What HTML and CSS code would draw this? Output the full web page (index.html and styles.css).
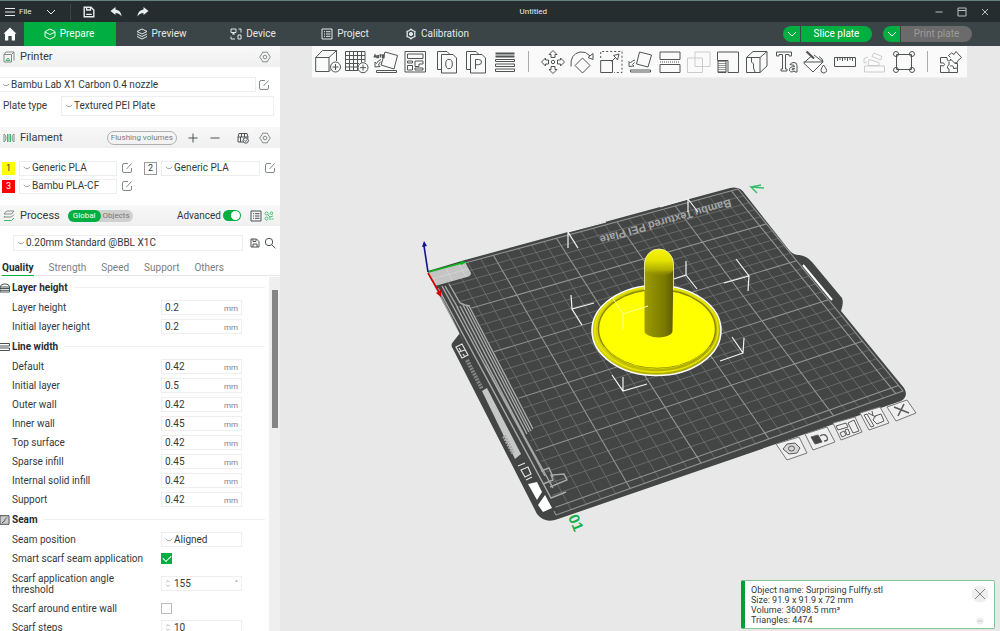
FILE: index.html
```html
<!DOCTYPE html>
<html lang="en">
<head>
<meta charset="utf-8">
<title>Untitled</title>
<link rel="stylesheet" href="styles.css">
</head>
<body>
<svg class="defs" aria-hidden="true">
  <symbol id="chev" viewBox="0 0 10 10"><path d="M1 3.5 L3.5 5.8 H6.5 L9 3.5"/></symbol>
  <symbol id="chevron" viewBox="0 0 10 10"><path d="M1 3 L5 7 L9 3"/></symbol>
  <symbol id="edit" viewBox="0 0 12 12"><path d="M7 1.5 H3 Q1.5 1.5 1.5 3 V9 Q1.5 10.5 3 10.5 H9 Q10.5 10.5 10.5 9 V6 M5.5 7 L10.5 1.5"/></symbol>
  <symbol id="gear" viewBox="0 0 12 12"><path d="M3.6 1.2 H8.4 L9 2.6 L11.3 6 L9 9.4 L8.4 10.8 H3.6 L3 9.4 L.7 6 L3 2.6Z"/><circle cx="6" cy="6" r="1.8"/></symbol>
  <symbol id="spin" viewBox="0 0 10 14"><path d="M2 5 L5 2 L8 5 M2 9 L5 12 L8 9"/></symbol>
</svg>

<header class="titlebar">
  <div class="title-left">
    <button class="file"><svg class="i12" viewBox="0 0 12 12"><path d="M1 2.5H11M1 6H11M1 9.5H11"/></svg>File</button>
    <button class="file-more" aria-label="More"><svg class="i10" viewBox="0 0 10 10"><use href="#chevron"/></svg></button>
    <span class="divider"></span>
    <button aria-label="Save"><svg class="i12" viewBox="0 0 12 12"><path stroke-width="1.4" d="M1.2 1.2H8L10.8 4V10.8H1.2Z"/><path stroke-width="1.3" d="M3.6 1.5V4H7.5V1.5M3.2 8.3H8.8"/></svg></button>
    <button aria-label="Undo"><svg class="i12 solid" viewBox="0 0 12 12"><path d="M.5 5 L5.5 1 V3.5 Q11 4 11.5 10.5 Q9.5 7 5.5 7 V9Z"/></svg></button>
    <button aria-label="Redo"><svg class="i12 solid" viewBox="0 0 12 12"><path d="M11.5 5 L6.5 1 V3.5 Q1 4 .5 10.5 Q2.5 7 6.5 7 V9Z"/></svg></button>
  </div>
  <h1>Untitled</h1>
  <div class="title-right">
    <button aria-label="Minimize"><svg class="i10" viewBox="0 0 10 10"><path d="M1.5 5H8.5"/></svg></button>
    <button aria-label="Maximize"><svg class="i10" viewBox="0 0 10 10"><path d="M1 1H9V9H1ZM1 3.5H9"/></svg></button>
    <button aria-label="Close"><svg class="i10" viewBox="0 0 10 10"><path d="M2 2L8 8M8 2L2 8"/></svg></button>
  </div>
</header>

<nav class="tabs">
  <button class="home" aria-label="Home"><svg class="i14 solid" viewBox="0 0 14 14"><path d="M7 .5 L13.5 6.8 H12 V13.5 H8.7 V9 H5.3 V13.5 H2 V6.8 H.5Z"/></svg></button>
  <button class="tab active"><svg class="i12" viewBox="0 0 12 12"><path d="M6 1 L11 3.6 V8.6 L6 11.2 L1 8.6 V3.6ZM1 4 L6 6.6 L11 4"/></svg>Prepare</button>
  <button class="tab"><svg class="i12" viewBox="0 0 12 12"><path d="M6 1 L11 3.5 L6 6 L1 3.5ZM1 6 L6 8.5 L11 6M1 8.5 L6 11 L11 8.5"/></svg>Preview</button>
  <button class="tab"><svg class="i12" viewBox="0 0 12 12"><path d="M1 1H6V4.5H1ZM3.5 4.5V6M2 6H5M8 7H11V11H8ZM8.5 1H11V4.5M1 8.5V11H5"/></svg>Device</button>
  <button class="tab"><svg class="i12" viewBox="0 0 12 12"><path d="M1 1H11V11H1ZM3 3.7H4M5 3.7H9.5M3 6H4M5 6H9.5M3 8.3H4M5 8.3H9.5"/></svg>Project</button>
  <button class="tab"><svg class="i12" viewBox="0 0 12 12"><path stroke-width="1.3" d="M6 1.2 L7.5 2.5 L10 3.5 L9.7 6 L10 8.5 L7.5 9.5 L6 10.8 L4.500 9.5 L2 8.5 L2.300 6 L2 3.500 L4.500 2.500Z"/><circle cx="6" cy="6" r="1.6" fill="currentColor"/></svg>Calibration</button>
  <div class="actions">
    <div class="split"><button class="drop" aria-label="Slice options"><svg class="i10" viewBox="0 0 10 10"><use href="#chevron"/></svg></button><button class="main">Slice plate</button></div>
    <div class="split"><button class="drop" aria-label="Print options"><svg class="i10" viewBox="0 0 10 10"><use href="#chevron"/></svg></button><button class="main off" disabled>Print plate</button></div>
  </div>
</nav>

<main class="work">
  <aside class="side">
    <section class="printer">
      <header class="bar"><svg class="i12" viewBox="0 0 12 12"><path d="M1 3.500H8.500V11H1ZM3 1H11V9.500M8.500 3.500L11 1M1 3.500L3 1"/><path class="green" d="M3 9.500H7L5 7Z"/></svg><h2>Printer</h2><button class="last" aria-label="Printer settings"><svg class="i12" viewBox="0 0 12 12"><use href="#gear"/></svg></button></header>
      <div class="line first">
        <div class="combo nozzle"><svg class="i10" viewBox="0 0 10 10"><use href="#chev"/></svg><select aria-label="Printer model"><option>Bambu Lab X1 Carbon 0.4 nozzle</option></select></div>
        <button aria-label="Edit printer"><svg class="i12" viewBox="0 0 12 12"><use href="#edit"/></svg></button>
      </div>
      <div class="line plate">
        <label for="plate">Plate type</label>
        <div class="combo tall"><svg class="i10" viewBox="0 0 10 10"><use href="#chev"/></svg><select id="plate"><option>Textured PEI Plate</option></select></div>
      </div>
    </section>

    <section class="filament">
      <header class="bar"><svg class="i12" viewBox="0 0 12 12"><path d="M1 2V10M11 2V10M1 2Q3 3 3 6T1 10M11 2Q9 3 9 6T11 10"/><path class="green" d="M4.500 2V10M6 2V10M7.500 2V10"/></svg><h2>Filament</h2>
        <div class="bar-tools"><button class="pill">Flushing volumes</button>
        <button aria-label="Add"><svg class="i12 dark" viewBox="0 0 12 12"><path d="M6 1.500V10.500M1.500 6H10.500"/></svg></button>
        <button aria-label="Remove"><svg class="i12 dark" viewBox="0 0 12 12"><path d="M1.500 6H10.500"/></svg></button>
        <button class="ams" aria-label="Sync filament"><svg class="i12 dark" viewBox="0 0 12 12"><path d="M2 1.500H10L11 5H1ZM1 5V10H6M4.500 2V5M7.500 2V5M3.500 5V10M11 5V6"/><circle cx="8.700" cy="8.500" r="2.700"/><path d="M7.500 8.500L8.500 9.500L10 7.500"/></svg></button>
        <button aria-label="Filament settings"><svg class="i12" viewBox="0 0 12 12"><use href="#gear"/></svg></button></div>
      </header>
      <div class="spools">
        <div class="spool"><button class="chip yellow">1</button><div class="combo"><svg class="i10" viewBox="0 0 10 10"><use href="#chev"/></svg><select aria-label="Filament 1"><option>Generic PLA</option></select></div><button aria-label="Edit filament 1"><svg class="i12" viewBox="0 0 12 12"><use href="#edit"/></svg></button></div>
        <div class="spool"><button class="chip">2</button><div class="combo"><svg class="i10" viewBox="0 0 10 10"><use href="#chev"/></svg><select aria-label="Filament 2"><option>Generic PLA</option></select></div><button aria-label="Edit filament 2"><svg class="i12" viewBox="0 0 12 12"><use href="#edit"/></svg></button></div>
        <div class="spool"><button class="chip red">3</button><div class="combo"><svg class="i10" viewBox="0 0 10 10"><use href="#chev"/></svg><select aria-label="Filament 3"><option>Bambu PLA-CF</option></select></div><button aria-label="Edit filament 3"><svg class="i12" viewBox="0 0 12 12"><use href="#edit"/></svg></button></div>
      </div>
    </section>

    <section class="process">
      <header class="bar"><svg class="i12" viewBox="0 0 12 12"><path d="M3.500 1H11L8.500 4H1ZM1 7H8.500L11 4.500"/><path class="green" d="M1 10.500H8.500L11 8M1 7.500L1.500 6"/></svg><h2>Process</h2>
        <div class="scope"><button class="on">Global</button><button>Objects</button></div>
        <label class="advanced">Advanced<input type="checkbox" class="switch" checked></label>
        <button aria-label="Parameter list"><svg class="i12 dark" viewBox="0 0 12 12"><path d="M1 1H11V11H1ZM3 3.700H4M5 3.700H9.500M3 6H4M5 6H9.500M3 8.300H4M5 8.300H9.500"/></svg></button>
        <button class="compare" aria-label="Compare presets"><svg class="i10 leaf" viewBox="0 0 10 10"><circle cx="2.500" cy="2.500" r="1.500"/><circle cx="7.500" cy="2.200" r="1.300"/><circle cx="2.500" cy="7.500" r="1.500"/><path d="M4 4L6 6L9 5M6 6L6 9M7.500 8H9.500M5 3.500V4"/></svg></button>
      </header>
      <div class="line preset">
        <div class="combo"><svg class="i10" viewBox="0 0 10 10"><use href="#chev"/></svg><select aria-label="Process preset"><option>0.20mm Standard @BBL X1C</option></select></div>
        <button aria-label="Save preset"><svg class="i10 dark" viewBox="0 0 10 10"><path d="M1 1H6.500L9 3.500V9H1ZM3 1V3.500H6V1M3 9V6H7V9"/></svg></button>
        <button aria-label="Search"><svg class="i12 dark" viewBox="0 0 12 12"><circle cx="5" cy="5" r="3.700"/><path d="M7.700 7.700L11.300 11.300"/></svg></button>
      </div>
      <div class="pages"><button class="on">Quality</button><button>Strength</button><button>Speed</button><button>Support</button><button>Others</button></div>
    </section>

    <section class="params">
      <form class="fields">
        <h3><svg class="i10" viewBox="0 0 10 10"><path d="M0 9V4Q1 1 4 1H6Q9 1 9.500 4V9ZM0 4H9.500M0 5.500H9.500M0 7.300H9.500"/></svg>Layer height</h3>
        <div class="field"><label for="f1">Layer height</label><span class="num"><input id="f1" value="0.2"><small>mm</small></span></div>
        <div class="field"><label for="f2">Initial layer height</label><span class="num"><input id="f2" value="0.2"><small>mm</small></span></div>
        <h3><svg class="i10" viewBox="0 0 10 10"><path d="M0 1.500H9.500V4H0M0 6H9.500M0 8.500H9.500V6"/></svg>Line width</h3>
        <div class="field"><label for="f3">Default</label><span class="num"><input id="f3" value="0.42"><small>mm</small></span></div>
        <div class="field"><label for="f4">Initial layer</label><span class="num"><input id="f4" value="0.5"><small>mm</small></span></div>
        <div class="field"><label for="f5">Outer wall</label><span class="num"><input id="f5" value="0.42"><small>mm</small></span></div>
        <div class="field"><label for="f6">Inner wall</label><span class="num"><input id="f6" value="0.45"><small>mm</small></span></div>
        <div class="field"><label for="f7">Top surface</label><span class="num"><input id="f7" value="0.42"><small>mm</small></span></div>
        <div class="field"><label for="f8">Sparse infill</label><span class="num"><input id="f8" value="0.45"><small>mm</small></span></div>
        <div class="field"><label for="f9">Internal solid infill</label><span class="num"><input id="f9" value="0.42"><small>mm</small></span></div>
        <div class="field"><label for="f10">Support</label><span class="num"><input id="f10" value="0.42"><small>mm</small></span></div>
        <h3><svg class="i10" viewBox="0 0 10 10"><path fill="#ccc" d="M0 .7H9V9.300H0Z"/><path d="M2 8L5 5.500V4.500L7 2.500"/></svg>Seam</h3>
        <div class="field"><label for="f11">Seam position</label><span class="num combo"><svg class="i10" viewBox="0 0 10 10"><use href="#chev"/></svg><select id="f11"><option>Aligned</option></select></span></div>
        <div class="field"><label for="f12">Smart scarf seam application</label><input id="f12" class="check" type="checkbox" checked></div>
        <div class="field double"><label for="f13">Scarf application angle threshold</label><span class="num"><svg class="spin" viewBox="0 0 10 14"><use href="#spin"/></svg><input id="f13" value="155"><small class="deg">°</small></span></div>
        <div class="field"><label for="f14">Scarf around entire wall</label><input id="f14" class="check" type="checkbox"></div>
        <div class="field"><label for="f15">Scarf steps</label><span class="num"><svg class="spin" viewBox="0 0 10 14"><use href="#spin"/></svg><input id="f15" value="10"></span></div>
      </form>
      <div class="track"><div class="thumb"></div></div>
    </section>
  </aside>

  <section class="view">
    <svg class="scene" viewBox="280 46 720 585" preserveAspectRatio="xMidYMid meet" role="img" aria-label="Build plate">
      <defs>
        <linearGradient id="rod" x1="0" x2="1" y1="0" y2="0"><stop offset="0" stop-color="#a09e00"/><stop offset=".25" stop-color="#918f00"/><stop offset=".7" stop-color="#7b7900"/><stop offset="1" stop-color="#5e5c00"/></linearGradient>
        <linearGradient id="dome" x1="0" x2="0" y1="0" y2="1"><stop offset="0" stop-color="#f8f600"/><stop offset=".4" stop-color="#e6e400"/><stop offset=".75" stop-color="#b5b300" stop-opacity=".9"/><stop offset="1" stop-color="#858300" stop-opacity="0"/></linearGradient>
        <linearGradient id="rim" x1="0" x2=".7" y1="0" y2="1"><stop offset="0" stop-color="#c8c600"/><stop offset=".5" stop-color="#d8d600"/><stop offset="1" stop-color="#a8a600"/></linearGradient>
      </defs>
      <path class="bed" d="M428 271 L465 260 L730 188 Q740 186 745 194 L789 250 Q793 255 799 255 Q807 256 812 262 L842 298 Q844 303 841 311 L904 388 Q909 396 901 401 L558 519 Q545 524 537 514 L453 349 Q450 345 453 342 L460 333Z"/>
      <path id="grid-minor" class="minor"/>
      <path id="grid-major" class="major"/>
      <path class="patch" d="M428 273 L465 262 L471 273 Q471 276 467 277 L435 286Z"/>
      <path class="tick" d="M446 268L452 281M432 279L468 269M459 264L466 277"/>
      <path fill="#434545" d="M438 287 L449 284 L459 303 L470 306 L535 429 L527 434 L546 470 L556 510 L545 516Z"/>
      <g class="stripe">
        <path d="M438 288L551 498L566 492"/><path d="M442 286L545 476"/><path d="M449 284L460 303"/>
        <path d="M445 286L458 308"/><path d="M457 307L524 435"/><path d="M460 306L527 434"/><path d="M463 305L529 432"/><path d="M466 305L531 431"/><path d="M469 306L533 429"/>
        <path d="M460 303L465 305L470 306"/><path d="M541 471L549 468L553 477"/><path d="M543 484L553 480L551 475L564 474L567 480L550 487"/><path d="M485 365L553 488"/>
      </g>
      <path class="band" d="M482 391L487 388L521 454L515 459Z"/>
      <path class="faint" d="M467 360L482 389" stroke-dasharray="2 1"/>
      <path class="glyph" d="M456 347L462 344L468 355L462 358ZM459 352L465 350M459 348L461 351M463 354L465 357"/>
      <path class="dark" d="M504 436L513 453" stroke-dasharray="2 1"/>
      <path class="glyph" d="M518 466L525 463M521 470L528 467L531 474L525 477ZM526 480L532 477"/>
      <path fill="#fff" d="M528 484L537 482L542 492L537 500ZM538 505L545 495L552 508L543 512Z"/>
      <path stroke="#fff" stroke-width="2" d="M803 265L832 300"/>
      <text class="plate-name" transform="translate(730 199) rotate(164)">Bambu Textured PEI Plate</text>
      <text class="plate-no" transform="translate(568 517) rotate(68)">01</text>
      <path fill="none" stroke="#38bf6c" stroke-width="1.500" d="M764 188L751 187L757 193M751 187L761 185"/>

      <path class="axis" stroke="#0bb41a" d="M428 272L462 263"/><path fill="#0bb41a" d="M460 261L467 262L461 265Z"/>
      <path class="axis" stroke="#10109a" d="M428 272L424 246"/><path fill="#10109a" d="M422 247L424 241L427 246Z"/>
      <path class="axis" stroke="#d40000" d="M428 273L439 292"/><path fill="#d40000" d="M436 293L441 290L441 297Z"/>

      <g class="bracket">
        <path d="M568 248V232L606 222M568 232L578 248"/><path d="M688 212V199L660 207M688 199L698 212"/><path d="M571 295L572 309L594 303M572 309L582 325"/>
        <path d="M686 261V275L674 279M686 275L697 289"/><path d="M736 259L749 276L724 283M749 276L748 291"/><path d="M732 337L743 353L720 361M743 353L744 338"/><path d="M612 375L623 391L647 384M623 391V377"/>
      </g>
      <ellipse cx="656.500" cy="330.500" rx="64.500" ry="45" fill="url(#rim)" stroke="#fff" stroke-width="1.500"/>
      <ellipse cx="656.500" cy="329.500" rx="61.500" ry="42.500" fill="none" stroke="#e6e400" stroke-width="1.600"/>
      <ellipse cx="657" cy="329" rx="58.500" ry="39.500" fill="#ffff00" stroke="#8b8900" stroke-width="1.400"/>
      <path d="M604 347Q625 369 657 369T710 347" fill="none" stroke="#d6d400"/>
      <path d="M644.500 264A14.500 15 0 0 1 673.500 264L672.500 331A14 6.500 0 0 1 644.500 331Z" fill="url(#rod)"/>
      <path d="M644.500 264A14.500 15 0 0 1 673.500 264V268A14.500 9 0 0 1 644.500 268Z" fill="url(#dome)"/>
      <path d="M644.500 290V264A14.500 15 0 0 1 673.500 264V290" fill="none" stroke="#f5f5c0" stroke-width=".8"/>
      <path d="M612 297L623 314L648 306M623 314V330" fill="none" stroke="#ffff9c"/>

      <g class="tile">
        <path d="M776 444L799 437L807 453L787 460Z"/><path d="M805 434L827 427L835 442L813 450Z"/><path d="M833 423L855 417L862 432L841 440Z"/><path d="M860 413L880 407L889 423L869 430Z"/><path d="M887 407L907 400L916 413L896 421Z"/>
      </g>
      <g class="tile-art">
        <path fill="#d5d5d5" d="M783 449L787 444L795 443L800 448L797 453L789 454Z"/><ellipse cx="791.500" cy="448.500" rx="3" ry="2.500"/>
        <path fill="#444" d="M811 437L818 435L822 442L815 444Z"/><path stroke-width="1.300" d="M820 436Q825 433 827 437T824 441"/>
        <path d="M836 426L846 423L848 427L838 430ZM840 433L844 431L846 435L842 437ZM848 423L854 420L859 431L853 433ZM845 430L848 429L850 434L847 435Z"/>
        <path d="M864 415L867 414L874 426L871 427ZM875 416L881 414L884 421L877 424L873 420ZM868 413L876 417M872 411L873 416"/>
        <path stroke-width="1.600" d="M894 407L909 413M904 404L898 416"/>
      </g>
    </svg>

    <div class="toolbar">
      <div class="group">
        <button aria-label="Add object"><svg viewBox="0 0 26 26"><path d="M.7 8.500H14V22.500H.7ZM.7 8.500L7.500 1.500H21.500L14 8.500M21.500 1.500V12M14 22.500L16 20.500"/><circle cx="20.500" cy="18" r="5"/><path d="M17.500 18H23.500M20.500 15V21"/></svg></button>
        <button aria-label="Add plate"><svg viewBox="0 0 26 26"><path d="M1.500 2.500H21V13M14 21.500H1.500V2.500M5.500 2.500V21.500M9.500 2.500V21.500M13.500 2.500V21.500M17.500 2.500V13.500M1.500 6.500H21M1.500 10.500H21M1.500 14.500H15M1.500 18H14"/><circle cx="19" cy="18.700" r="5"/><path d="M16 18.700H22M19 15.700V21.700"/></svg></button>
        <button aria-label="Auto orient"><svg viewBox="0 0 26 26"><path d="M12 3L24.500 6.500L21 20L8 16Z"/><path d="M2 18V13L3.500 14.500Q5 11.500 8 10.500M2 18L7 17.500L5.500 16Q6 14 8 12.500M3.500 21.500H23.500V23.500H3.500Z"/><path stroke-width="1.300" d="M1 8.500L2 6L3 8.500M4 6V8.500H5.500V6M6.500 6H8.500M7.500 6V8.500M9.500 6H11V8.500H9.500Z"/></svg></button>
        <button aria-label="Arrange"><svg viewBox="0 0 26 26"><path d="M3 2.500H23.500V23H3ZM5.500 5H21V9.500H5.500ZM5.500 12H10.500V14H5.500ZM5.500 16.500H10.500V21H5.500ZM13 12H21V15H17V17.500H13ZM13 19H21V21H13Z"/></svg></button>
      </div>
      <div class="group">
        <button aria-label="Split to objects"><svg viewBox="0 0 26 26"><path d="M7.500 20.500H3.500V2.500H13L16 5.500M7.500 5.500H19L22.500 9V24H7.500Z"/><ellipse cx="15" cy="15" rx="3.300" ry="4.700"/></svg></button>
        <button aria-label="Split to parts"><svg viewBox="0 0 26 26"><path d="M7.500 20.500H3.500V2.500H13L16 5.500M7.500 5.500H19L22.500 9V24H7.500Z"/><path d="M12.500 20V10.500H15.500Q18.500 10.500 18.500 13T15.500 15.700H12.500"/></svg></button>
        <button aria-label="Variable layer height"><svg viewBox="0 0 26 26"><path stroke-width="1.800" d="M3.500 4.500H22.500M3.500 7.500H22.500"/><path d="M3.500 10.500H22.500V12.500H3.500ZM3.500 15H22.500V17.500H3.500ZM3.500 20H22.500V22.500H3.500Z"/></svg></button>
      </div>
      <span class="sep"></span>
      <div class="group wide">
        <button aria-label="Move"><svg viewBox="0 0 26 26"><circle cx="13" cy="13" r="1.700"/><path d="M13 1.500L17 5.500H15V8.500H11V5.500H9ZM13 24.500L17 20.500H15V17.500H11V20.500H9ZM1.500 13L5.500 9V11H8.500V15H5.500V17ZM24.500 13L20.500 9V11H17.500V15H20.500V17Z"/></svg></button>
        <button aria-label="Rotate"><svg viewBox="0 0 26 26"><path d="M13.500 9L21 16.500L13.500 24L6 16.500ZM2 17.500Q1 5 11 3Q17 2 21 7M19 8.500L24 10.500L24 4.500Z"/></svg></button>
        <button aria-label="Scale"><svg viewBox="0 0 26 26"><path d="M2.700 11.500H14.500V23.500H2.700Z"/><path stroke-dasharray="2 2" d="M2.700 9V2.500H24V23.500H16"/><path d="M13.500 12.500L18 8M15.500 6.500L21 5L19.500 11L17.500 8.500Z"/></svg></button>
        <button aria-label="Lay on face"><svg viewBox="0 0 26 26"><path d="M12.500 3L24.500 6L21 18L9.500 15Z"/><path d="M2 17.500V12.500L3.500 14Q5 11.500 8 11M2 17.500L7 17L5.500 15.500L7.500 13.500M3.500 21H23.500V23H3.500Z"/></svg></button>
        <button aria-label="Cut"><svg viewBox="0 0 26 26"><path d="M3 3H23V10.500H3ZM3 15.500H23V23.500H3Z"/><path stroke-dasharray="1 1" d="M3 13H23"/></svg></button>
        <button class="faded" aria-label="Boolean"><svg viewBox="0 0 26 26"><path d="M1.500 9H16.500V23.500H1.500ZM9 3H24V17.500H9Z"/></svg></button>
        <button aria-label="Supports"><svg viewBox="0 0 26 26"><path d="M2.500 3H23.500V23.500H13V11.500H2.500Z"/><path stroke-dasharray="1 1" stroke-width="1.200" d="M4 12V23.500M6 12V23.500M8 12V23.500M10 12V23.500"/><path d="M3 11.500V23.500H11V11.500"/></svg></button>
        <button aria-label="Seam painting"><svg viewBox="0 0 26 26"><path d="M2.500 8.500H16V23.500H2.500ZM2.500 8.500L9 2.500H23L16 8.500M23 2.500V17L16 23.500M7.500 9V13L9.500 15V19L11 23"/></svg></button>
        <button aria-label="Text"><svg viewBox="0 0 26 26"><path d="M2.500 3H17.500V7H15V5.500H11.500V20H13V22H7V20H8.500V5.500H5V7H2.500Z"/><path d="M16 15.500Q17 13.500 20 13.500Q23 13.500 23 16.500V23H21L20.500 22Q15.500 24.500 15.500 20.500Q15.500 17.500 20.500 17.700Q20.500 15.500 18 16ZM20.500 19.500Q17.500 19 18 20.700Q19 21.700 20.500 20Z"/></svg></button>
        <button aria-label="Color painting"><svg viewBox="0 0 26 26"><path d="M11 6L20 13L10 23L.7 14L9 6.500M.7 13H20Q20.500 10.500 16 7.500M20.500 16Q24.500 21 23.500 22.500Q21 25.500 18.500 23Q17 21 20.500 16Z"/><path stroke-width="2.200" d="M3.500 2.500L11 9.500"/></svg></button>
        <button aria-label="Measure"><svg viewBox="0 0 26 26"><path d="M2.500 8.500H23.500V17.500H2.500ZM5.500 8.500V12M8 8.500V11M10.500 8.500V12M13 8.500V11M15.500 8.500V12M18 8.500V11M20.500 8.500V12"/></svg></button>
        <button class="faded" aria-label="Assembly"><svg viewBox="0 0 26 26"><path d="M3.500 17H23.500V23H3.500ZM13 4L21 7.500L19.500 11L11 7.500ZM8 10.500L18 13.500V16.500H7ZM3 14V9.500L7 8M3 14L6 13"/></svg></button>
        <button aria-label="Simplify"><svg viewBox="0 0 26 26"><path d="M5.500 5.500H20.500V20.500H5.500Z"/><circle cx="5" cy="5" r="2.500"/><circle cx="21" cy="5" r="2.500"/><circle cx="5" cy="21" r="2.500"/><circle cx="21" cy="21" r="2.500"/></svg></button>
      </div>
      <span class="sep"></span>
      <div class="group">
        <button aria-label="Assembly view"><svg viewBox="0 0 26 26"><path d="M3.500 8.500H10Q9.500 12 12 12T13.500 10L18 14.500H20.500V23.500H3.500V16.500Q7.500 18 7.500 15.500T3.500 14ZM12 23.500V20Q9.500 19.500 10.500 17.500T12 16V13M13 17Q17 16 16.500 19.500L20.500 19M13.500 8.500L11.500 6.500L14.500 4L17 5.500L19 2.500L24.500 8.500L21 11.500Q21 14.500 17.500 14"/></svg></button>
      </div>
    </div>

    <div class="notice">
      <p>Object name: Surprising Fulffy.stl<br>Size: 91.9 x 91.9 x 72 mm<br>Volume: 36098.5 mm³<br>Triangles: 4474</p>
      <div class="notice-tools">
        <button aria-label="Close notice"><svg viewBox="0 0 18 18"><circle cx="9" cy="9" r="8.500"/><path d="M4 4L14 14M14 4L4 14"/></svg></button>
        <button class="fold" aria-label="Collapse notice"><svg viewBox="0 0 10 10"><circle cx="5" cy="5" r="4.500"/><path d="M2 5H8"/></svg></button>
      </div>
    </div>
  </section>
</main>
<script src="grid.js"></script>
</body>
</html>
```
FILE: styles.css
```css
* { box-sizing: border-box; }
body { margin: 0; height: 100vh; display: flex; flex-direction: column; overflow: hidden; font: 10px/14px Roboto, "Liberation Sans", sans-serif; color: #333a3c; background: #fff; }
h1, h2, h3, p { margin: 0; font: inherit; }
button, input, select { font: inherit; color: inherit; border: 0; padding: 0; margin: 0; background: none; border-radius: 0; }
button { display: inline-flex; align-items: center; justify-content: center; flex: none; }
select { appearance: none; flex: 1; min-width: 0; outline: 0; }
input { min-width: 0; }
svg { fill: none; stroke: currentColor; display: block; flex: none; }
.defs { width: 0; height: 0; position: absolute; }
.i10 { width: 10px; height: 10px; }
.i12 { width: 12px; height: 12px; }
.i14 { width: 14px; height: 14px; }
.solid { fill: currentColor; stroke: none; }
.green { stroke: #3dbb6b; }

.titlebar { display: flex; align-items: center; height: 22px; flex: none; background: #252d2f; border-top: 1px solid #64807f; color: #e9eded; }
.title-left { display: flex; align-items: center; height: 100%; padding-left: 4px; }
.title-left button { width: 27px; }
.title-left .file { width: auto; gap: 3px; font-size: 8px; }
.title-left .file-more { width: 38px; }
.divider { width: 1px; height: 16px; background: #3b4547; margin-right: 5px; }
.titlebar h1 { flex: 1; text-align: center; font-size: 8px; padding-right: 24px; }
.title-right { display: flex; gap: 13px; padding-right: 10px; color: #b9c0c1; }

.tabs { display: flex; height: 24px; flex: none; background: #3b4446; color: #e4e8e8; }
.home { width: 24px; color: #fff; padding-right: 4px; }
.tab { width: 92px; gap: 4px; padding-right: 2px; }
.tab.active { background: #00ae42; color: #effff4; }
.actions { display: flex; align-items: center; gap: 11px; margin-left: auto; padding-right: 28px; }
.split { display: flex; gap: 1px; height: 16px; }
.split button { background: #00ae42; color: #fff; }
.split .drop { width: 17px; border-radius: 8px 0 0 8px; }
.split .main { width: 71px; border-radius: 0 8px 8px 0; }
.split .off { background: #6b6b6b; color: #9c9c9c; }

.work { flex: 1; display: flex; min-height: 0; }
.side { width: 280px; flex: none; display: flex; flex-direction: column; background: #fff; }
.side svg { color: #858a8b; }
.side svg.dark { color: #4c5254; }
.side svg.leaf { color: #4fbf78; }
.bar { display: flex; align-items: center; height: 21px; padding: 0 9px 0 3px; background: linear-gradient(#f8f8f8, #f0f0f0); }
.bar h2 { margin-left: 5px; font-size: 11px; }
.bar .last { margin-left: auto; }
.bar-tools { margin-left: auto; display: flex; align-items: center; gap: 10px; }
.ams { margin-left: 6px; }
.pill { height: 14px; padding: 0 3px; border: 1px solid #b0b0b0; border-radius: 7px; font-size: 8px; color: #7b7f80; }
.line { display: flex; align-items: center; }
.combo { display: flex; align-items: center; gap: 1px; flex: 1; min-width: 0; height: 15px; border: 1px solid #eee; padding-left: 3px; }
.combo .i10 { width: 8px; }
.combo.tall { height: 20px; }
.nozzle { border-left: 0; padding-left: 2px; }
.first { margin-top: 10px; gap: 2px; padding-right: 10px; }
.plate { margin-top: 4px; padding: 0 6px 0 3px; }
.plate label { width: 58px; }
.filament { margin-top: 11px; }
.spools { display: grid; grid-template-columns: 131px 132px; column-gap: 11px; row-gap: 2px; padding: 12px 0 0 2px; }
.spool { display: flex; align-items: center; gap: 4px; height: 16px; }
.spool .combo { padding-left: 3px; }
.chip { width: 13px; height: 13px; border: 1px solid #999; font-size: 9px; line-height: 11px; }
.chip.yellow { background: #ff0; border-color: #ff0; }
.chip.red { background: #f00; border-color: #f00; color: #fff; }
.process { margin-top: 11px; }
.process .bar { padding-right: 6px; }
.scope { display: flex; margin-left: 8px; background: #d0d0d0; border-radius: 6px; height: 12px; font-size: 8px; color: #777; }
.scope button { padding: 0 3px 0 2px; }
.scope .on { background: #00ae42; color: #fff; border-radius: 6px; padding: 0 5px; }
.advanced { margin-left: auto; display: flex; align-items: center; gap: 2px; margin-right: 9px; }
.switch { appearance: none; width: 18px; height: 11px; border-radius: 6px; background: #00ae42; display: flex; justify-content: flex-end; padding: 1px; }
.switch::before { content: ""; width: 9px; height: 9px; border-radius: 50%; background: #fff; }
.compare { margin-left: 2px; }
.preset { margin-top: 9px; padding: 0 4px 0 13px; gap: 4px; }
.preset .combo { height: 16px; }
.preset button:first-of-type { margin-left: 3px; }
.pages { display: flex; gap: 15px; height: 24px; margin-top: 1px; padding-left: 2px; border-bottom: 1px solid #e2e8e4; color: #7b8082; }
.pages button { padding: 8px 0 0; }
.pages .on { font-weight: 700; color: #262e30; border-bottom: 1px solid #00ae42; margin-bottom: -1px; }

.params { flex: 1; min-height: 0; display: flex; padding-top: 1px; }
.fields { flex: 1; overflow: hidden; min-width: 0; }
.fields h3 { display: flex; align-items: center; gap: 2px; height: 21px; font-weight: 700; color: #262e30; }
.fields h3 svg { color: #4c5254; }
.fields h3::after { content: ""; flex: 1; height: 1px; background: #f0f0f0; margin: 0 4px; }
.field { display: grid; grid-template-columns: 149px 81px; align-items: center; height: 19px; padding-left: 12px; line-height: 11px; }
.field.double { height: 31px; }
.field label { padding-right: 10px; }
.num { display: flex; align-items: center; height: 15px; border: 1px solid #eee; padding: 0 3px; }
.num input { flex: 1; width: 20px; outline: 0; }
.num small { font-size: 8px; color: #7b8082; padding-top: 2px; }
.num .deg { align-self: flex-start; padding: 0; }
.spin { width: 6px; height: 13px; }
.spin + input { padding-left: 3px; }
.check { appearance: none; width: 11px; height: 11px; border: 1px solid #bbb; }
.check:checked { background: #00ae42; border-color: #00ae42; display: grid; place-items: center; }
.check:checked::before { content: ""; width: 7px; height: 4px; border: solid #fff; border-width: 0 0 1px 1px; rotate: -45deg; margin-bottom: 2px; }
.track { width: 11px; background: #efefef; padding: 13px 2px 0 3px; }
.thumb { height: 138px; background: #858585; }

.view { flex: 1; position: relative; min-width: 0; background: #e8e8e8; }
.scene { width: 100%; height: 100%; stroke: none; }
.bed { fill: #434545; }
.minor { stroke: #777979; stroke-width: .7; }
.major { stroke: #919393; stroke-width: 1.1; }
.patch { fill: #c4c4c4; }
.tick { stroke: #d8d8d8; stroke-width: .7; }
.stripe { fill: none; stroke: #a7a9a9; stroke-width: 1.4; }
.band { fill: #c6c6c6; }
.faint { stroke: #858787; stroke-width: 4; }
.scene .dark { stroke: #aaa; stroke-width: 4; }
.glyph { fill: none; stroke: #e0e0e0; stroke-width: 1.2; }
.plate-name { font: 700 11px "Liberation Sans", sans-serif; fill: #a4a6a6; }
.plate-no { font: 700 15px "Liberation Sans", sans-serif; fill: #10b14b; }
.axis { fill: none; stroke-width: 1.6; }
.bracket { fill: none; stroke: #f2f2f2; stroke-width: 1.2; }
.tile { fill: #efefef; stroke: #777; stroke-width: 1; }
.tile-art { fill: none; stroke: #5a5a5a; stroke-width: 1; }

.toolbar { position: absolute; top: 0; left: 50%; width: 655px; margin-left: -328px; height: 32px; padding-left: 1px; display: flex; align-items: center; background: #fafafa; color: #505455; border-bottom: 1px solid #f0f0f0; }
.group { display: flex; }
.group + .group { margin-left: 3px; }
.group button { width: 29px; height: 26px; }
.group svg { width: 26px; height: 26px; }
.group:last-child { padding-right: 3px; }
.group.wide { flex: 1; justify-content: space-between; }
.faded { color: #ccc; }
.sep { width: 1px; height: 21px; margin: 0 9px; background: #aaa; }
.wide + .sep { margin-right: 7px; }

.notice { position: absolute; right: 5px; bottom: 2px; width: 254px; display: flex; justify-content: space-between; background: #fff; border: 1px solid #7fc998; border-left: 4px solid #0a9c3c; border-radius: 2px; padding: 4px 5px 3px 6px; font-size: 9px; line-height: 10px; }
.notice-tools { display: flex; flex-direction: column; justify-content: space-between; align-items: center; color: #858585; }
.notice-tools svg { width: 18px; height: 18px; }
.notice-tools .fold svg { width: 8px; height: 8px; }
.notice-tools circle { fill: #eee; stroke: none; }
.notice-tools .fold { color: #bbb; }
```
FILE: grid.js
```js
// Bed corners on screen, in bed order: origin, +y, +x+y, +x.
const corners = [[428, 273], [738, 189], [903, 391], [556, 515]];
const size = 256;

function projector([a, b, c, d]) {
  const dx1 = b[0] - c[0], dx2 = d[0] - c[0], sx = a[0] - b[0] + c[0] - d[0];
  const dy1 = b[1] - c[1], dy2 = d[1] - c[1], sy = a[1] - b[1] + c[1] - d[1];
  const det = dx1 * dy2 - dx2 * dy1;
  const g = (sx * dy2 - dx2 * sy) / det;
  const h = (dx1 * sy - sx * dy1) / det;
  return (u, v) => {
    const w = g * u + h * v + 1;
    const x = (b[0] - a[0] + g * b[0]) * u + (d[0] - a[0] + h * d[0]) * v + a[0];
    const y = (b[1] - a[1] + g * b[1]) * u + (d[1] - a[1] + h * d[1]) * v + a[1];
    return (x / w).toFixed(1) + " " + (y / w).toFixed(1);
  };
}

const at = projector(corners);
let minor = "", major = "";
for (let mm = 0; mm <= size; mm += 10) {
  const t = mm / size;
  const lines = `M${at(t, 0)}L${at(t, 1)}M${at(0, t)}L${at(1, t)}`;
  if (mm % 50 === 0) major += lines; else minor += lines;
}
major += `M${at(1, 0)}L${at(1, 1)}L${at(0, 1)}`;
document.getElementById("grid-minor").setAttribute("d", minor);
document.getElementById("grid-major").setAttribute("d", major);
```
